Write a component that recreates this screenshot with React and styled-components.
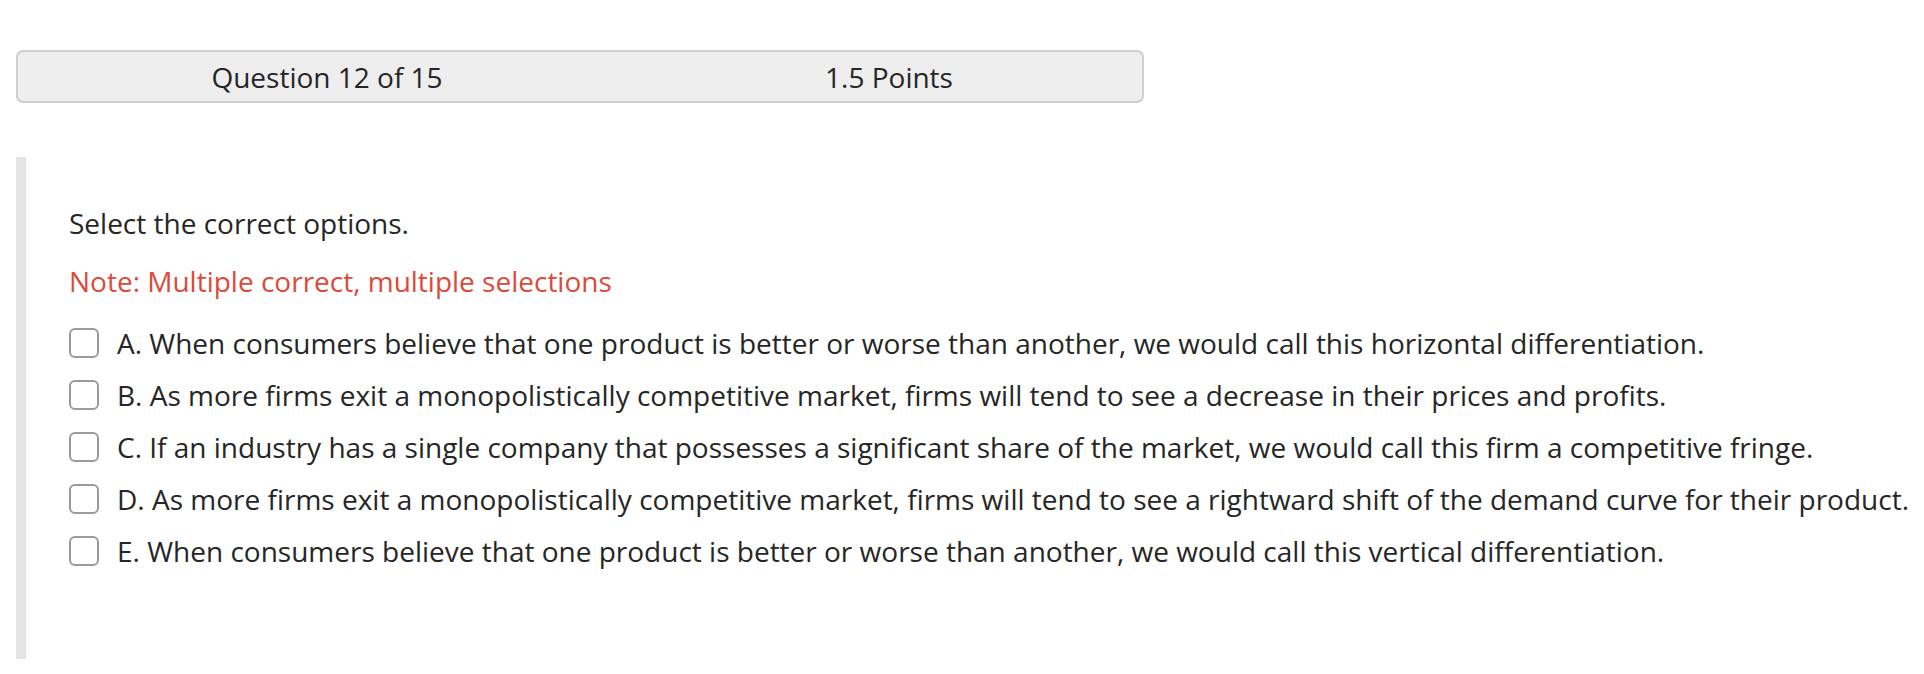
import React from 'react';
import styled, { createGlobalStyle } from 'styled-components';

const GlobalStyle = createGlobalStyle`
  body {
    margin: 0;
    background: #fff;
    font-family: "Open Sans", "Noto Sans", sans-serif;
    color: #262626;
  }
`
const Page = styled.div`
  padding: 50px 0 0 16px;
`
const Header = styled.div`
  display: grid;
  grid-template-columns: 618px 1fr;
  align-items: center;
  width: 1128px;
  height: 53px;
  box-sizing: border-box;
  background: #eeeeee;
  border: 2px solid #cfcfcf;
  border-radius: 7px;
  font-size: 28px;
`
const HeaderCell = styled.div`
  text-align: center;
`
const Section = styled.section`
  margin-top: 54px;
  border-left: 10px solid #e4e4e4;
  padding: 45px 0 82px 43px;
  font-size: 28px;
`
const Prompt = styled.p`
  margin: 0;
  line-height: 42px;
  color: ${props => props.note ? '#dc4a3a' : '#262626'};
  margin-top: ${props => props.note ? '16px' : '0'};
`
const Options = styled.div`
  margin-top: 15px;
`
const Row = styled.label`
  display: flex;
  align-items: center;
  height: 52px;
  white-space: nowrap;
`
const Box = styled.span`
  flex: none;
  width: 30px;
  height: 30px;
  box-sizing: border-box;
  border: 2px solid #9a9a9a;
  border-radius: 6px;
  background: #fff;
  margin-right: 18px;
`

const options = [
  'A. When consumers believe that one product is better or worse than another, we would call this horizontal differentiation.',
  'B. As more firms exit a monopolistically competitive market, firms will tend to see a decrease in their prices and profits.',
  'C. If an industry has a single company that possesses a significant share of the market, we would call this firm a competitive fringe.',
  'D. As more firms exit a monopolistically competitive market, firms will tend to see a rightward shift of the demand curve for their product.',
  'E. When consumers believe that one product is better or worse than another, we would call this vertical differentiation.',
]

export default function App() {
  return (
    <Page>
      <GlobalStyle />
      <Header>
        <HeaderCell>Question 12 of 15</HeaderCell>
        <HeaderCell>1.5 Points</HeaderCell>
      </Header>
      <Section>
        <Prompt>Select the correct options.</Prompt>
        <Prompt note>Note: Multiple correct, multiple selections</Prompt>
        <Options>
          {options.map(text => (
            <Row key={text}>
              <Box />
              <span>{text}</span>
            </Row>
          ))}
        </Options>
      </Section>
    </Page>
  )
}
